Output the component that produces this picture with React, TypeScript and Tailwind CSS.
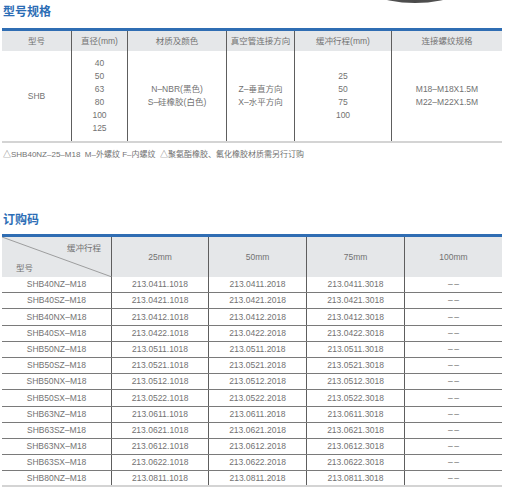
const FONT = { fontFamily: '"Liberation Sans", "Noto Sans CJK SC", sans-serif' };

const specCols = 'grid grid-cols-[70px_56px_99px_68px_97px_110px]';
const orderCols = 'grid grid-cols-[110px_97px_98px_98px_97px]';

const orderRows: [string, string][] = [
  ['SHB40NZ–M18', '0411'],
  ['SHB40SZ–M18', '0421'],
  ['SHB40NX–M18', '0412'],
  ['SHB40SX–M18', '0422'],
  ['SHB50NZ–M18', '0511'],
  ['SHB50SZ–M18', '0521'],
  ['SHB50NX–M18', '0512'],
  ['SHB50SX–M18', '0522'],
  ['SHB63NZ–M18', '0611'],
  ['SHB63SZ–M18', '0621'],
  ['SHB63NX–M18', '0612'],
  ['SHB63SX–M18', '0622'],
  ['SHB80NZ–M18', '0811'],
];

function Cell({ children, last }: { children: React.ReactNode; last?: boolean }) {
  return (
    <div className={`flex flex-col items-center justify-center text-center ${last ? '' : 'border-r border-[#5e5e5e]'}`}>
      {children}
    </div>
  );
}

export default function App() {
  return (
    <div className="relative w-[508px] h-[496px] overflow-hidden bg-white text-[#727272] text-[8.5px]" style={FONT}>
      {/* 右上角装饰 */}
      <div className="absolute left-[283px] top-[-261px] w-[264px] h-[264px] rounded-full bg-gradient-to-r from-[#7a7a7a] via-[#4a4a4a] to-[#7a7a7a]" />

      <div className="pl-[2px] pr-[6px] pt-[5px]">
        <h2 className="pl-[1px] text-[12px] leading-[14px] font-bold text-[#2c6db5]">型号规格</h2>

        {/* 型号规格表 */}
        <div className="mt-[9px] border-t-[3px] border-[#2f6db3]">
          <div className={`${specCols} h-[20px] bg-[#e5e7e9]`}>
            <Cell>型号</Cell>
            <Cell>直径(mm)</Cell>
            <Cell>材质及颜色</Cell>
            <Cell>真空管连接方向</Cell>
            <Cell>缓冲行程(mm)</Cell>
            <Cell last>连接螺纹规格</Cell>
          </div>
          <div className={`${specCols} h-[92px] border-b-2 border-[#d4d4d4] leading-[13px]`}>
            <Cell>SHB</Cell>
            <Cell>
              <span>40</span>
              <span>50</span>
              <span>63</span>
              <span>80</span>
              <span>100</span>
              <span>125</span>
            </Cell>
            <Cell>
              <span>N–NBR(黑色)</span>
              <span>S–硅橡胶(白色)</span>
            </Cell>
            <Cell>
              <span>Z–垂直方向</span>
              <span>X–水平方向</span>
            </Cell>
            <Cell>
              <span>25</span>
              <span>50</span>
              <span>75</span>
              <span>100</span>
            </Cell>
            <Cell last>
              <span>M18–M18X1.5M</span>
              <span>M22–M22X1.5M</span>
            </Cell>
          </div>
        </div>

        <p className="mt-[6px] pl-[1px] text-[8px] leading-[12px] whitespace-nowrap">
          △SHB40NZ–25–M18&nbsp;&nbsp;M–外螺纹 F–内螺纹&nbsp;&nbsp;△聚氨酯橡胶、氟化橡胶材质需另行订购
        </p>

        <h2 className="mt-[52px] pl-[1px] text-[12px] leading-[14px] font-bold text-[#2c6db5]">订购码</h2>

        {/* 订购码表 */}
        <div className="mt-[7px] border-t-[3px] border-[#2f6db3]">
          <div className={`${orderCols} h-[40px] bg-[#e5e7e9]`}>
            <div className="relative border-r border-[#5e5e5e]">
              <svg className="absolute inset-0" width="110" height="40">
                <line x1="0" y1="0" x2="110" y2="40" stroke="#8a8a8a" strokeWidth="0.8" />
              </svg>
              <span className="absolute right-[10px] top-[5px]">缓冲行程</span>
              <span className="absolute left-[14px] top-[25px]">型号</span>
            </div>
            <Cell>25mm</Cell>
            <Cell>50mm</Cell>
            <Cell>75mm</Cell>
            <Cell last>100mm</Cell>
          </div>
          {orderRows.map(([model, code], i) => (
            <div
              key={model}
              className={`${orderCols} h-[16.2px] ${i === orderRows.length - 1 ? 'border-b-2 border-[#d4d4d4]' : 'border-b border-[#7a7a7a]'}`}
            >
              <Cell>{model}</Cell>
              <Cell>213.{code}.1018</Cell>
              <Cell>213.{code}.2018</Cell>
              <Cell>213.{code}.3018</Cell>
              <Cell last>{'–\u2009–'}</Cell>
            </div>
          ))}
        </div>
      </div>
    </div>
  );
}
